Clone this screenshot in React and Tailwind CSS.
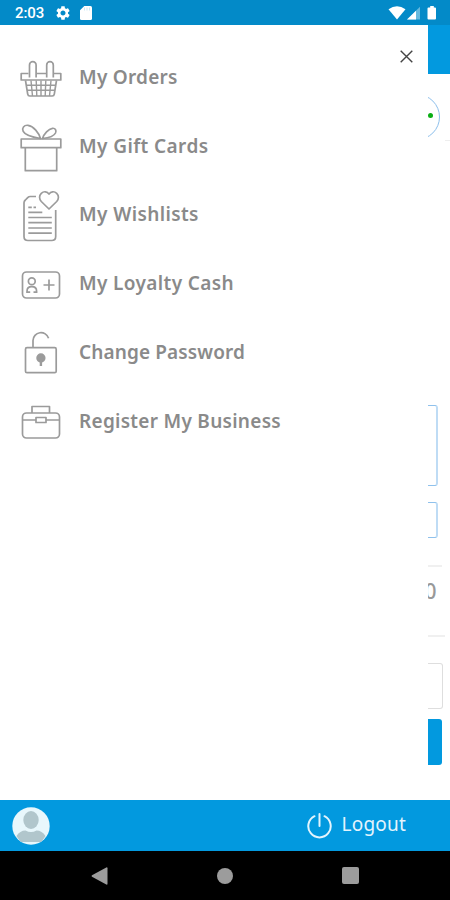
import React from "react";

const iconProps = {
  viewBox: "0 0 44 68",
  width: 44,
  height: 68,
  fill: "none",
  stroke: "#9b9b9b",
  strokeWidth: 1.7,
  strokeLinejoin: "round",
  className: "shrink-0",
};

const BasketIcon = () => (
  <svg {...iconProps}>
    <path d="M11.500 34.500V22a3.300 3.300 0 0 1 6.600 0v12.500M28.700 34.500V22a3.300 3.300 0 0 1 6.600 0v12.500" />
    <path d="M10.500 30.500H3.200v6.500h39.600v-6.500h-7.500M18.500 30.500h10" />
    <path d="M7.500 37.500l2.200 13.700q.3 1.800 2 1.800h22.600q1.700 0 2-1.800l2.200-13.700" />
    <path
      strokeWidth="1.400"
      d="M8.300 42.200h29.500M9 47.200h28M13 37.500l1.500 15.500M18.200 37.500l.6 15.500M23 37.500V53M27.800 37.500L27.200 53M33 37.500L31.500 53"
    />
  </svg>
);

const GiftIcon = () => (
  <svg {...iconProps}>
    <path d="M3.200 27h39.600v8.700H3.200zM7.300 35.700h31.400v23H7.300z" />
    <path d="M22.500 26.500C21 21 15.500 14 10 13.300c-4-.4-6.500 2.700-4.800 6C7.200 23.500 15 25.200 22.500 26.500zM24.500 26.500C26 21.500 30.500 17 34.500 16.300c2.700-.3 4.200 2 3 4.700-1.700 3.500-7 4.900-13 5.500z" />
  </svg>
);

const WishlistIcon = () => (
  <svg {...iconProps}>
    <path d="M18 16.500h-5.700q-1.500 0-2.600 1.100l-2.300 2.400Q6 21.100 6 22.700V56.500q0 4 4 4h23.700q4 0 4-4V30" />
    <path d="M31 29l-7.700-7.500c-2.300-2.400-2.300-6 0-8.200 2.400-2.300 5.900-2 7.700.8 1.800-2.800 5.300-3.100 7.700-.8 2.300 2.200 2.300 5.800 0 8.200z" />
    <path d="M10.300 27.300h3.500M15.500 27.300h2.500M10.300 32.300h14M10.300 37.500h23.500M10.300 42.700h23.500M10.300 48h23.500M10.300 53.200h23.500" />
  </svg>
);

const LoyaltyIcon = () => (
  <svg {...iconProps}>
    <rect x="4.500" y="23" width="37" height="26" rx="4" />
    <circle cx="13.800" cy="32.300" r="3.400" />
    <path d="M9 44v-1.800q0-4.500 4.800-4.500t4.800 4.500V44M9 43.200h3.200M15.500 43.200h3.200M31 30.500v11M25.500 36h11" />
  </svg>
);

const PasswordIcon = () => (
  <svg {...iconProps}>
    <rect x="7.500" y="29.700" width="30.700" height="25" rx="1.500" />
    <path d="M15 29.500V22.500a8 8 0 0 1 15.600-2.300" />
    <circle cx="22.900" cy="40" r="3.800" fill="#9b9b9b" />
    <path strokeWidth="2.400" d="M22.900 42v6" />
  </svg>
);

const BriefcaseIcon = () => (
  <svg {...iconProps}>
    <rect x="4.500" y="26" width="37" height="25" rx="4" />
    <path d="M14 26v-6.500h17.500V26M4.500 33h13.500M28 33h13.500M18 30.500h10v5h-10z" />
  </svg>
);

const menuItems = [
  { label: "My Orders", icon: BasketIcon, tracking: "tracking-[0.25px]" },
  { label: "My Gift Cards", icon: GiftIcon, tracking: "tracking-[0.4px]" },
  { label: "My Wishlists", icon: WishlistIcon, tracking: "tracking-[0.38px]" },
  { label: "My Loyalty Cash", icon: LoyaltyIcon, tracking: "tracking-[0.37px]" },
  { label: "Change Password", icon: PasswordIcon, tracking: "tracking-[0.12px]" },
  {
    label: "Register My Business",
    icon: BriefcaseIcon,
    tracking: "tracking-[0.28px]",
  },
];

const StatusBar = () => (
  <div className="flex h-[25px] shrink-0 items-center bg-[#038ac8] pl-[15px] pr-[13px] text-white">
    <span className="w-[40px] pt-px font-[Roboto] text-[15px] font-medium leading-[24px] tracking-[-0.1px]">
      2:03
    </span>
    <svg className="ml-px" width="14" height="14" viewBox="2 2 20 20" fill="white">
      <path d="M19.140 12.940c.04-.3.06-.61.06-.94 0-.32-.02-.64-.07-.94l2.030-1.580c.18-.14.23-.41.12-.61l-1.920-3.320c-.12-.22-.37-.29-.59-.22l-2.390.96c-.5-.38-1.030-.7-1.620-.94l-.36-2.540c-.04-.24-.24-.41-.48-.41h-3.840c-.24 0-.43.17-.47.41l-.36 2.540c-.59.24-1.130.57-1.620.94l-2.390-.96c-.22-.08-.47 0-.59.22L2.740 8.870c-.12.21-.08.47.12.61l2.030 1.580c-.05.3-.09.63-.09.94s.02.64.07.94l-2.030 1.580c-.18.14-.23.41-.12.61l1.920 3.320c.12.22.37.29.59.22l2.390-.96c.5.38 1.030.7 1.620.94l.36 2.540c.05.24.24.41.48.41h3.840c.24 0 .44-.17.47-.41l.36-2.540c.59-.24 1.130-.56 1.620-.94l2.390.96c.22.08.47 0 .59-.22l1.920-3.320c.12-.22.07-.47-.12-.61l-2.010-1.580zM12 15.600c-1.980 0-3.600-1.620-3.600-3.600s1.620-3.600 3.600-3.600 3.600 1.620 3.600 3.600-1.620 3.600-3.600 3.600z" />
    </svg>
    <svg className="ml-[10px]" width="12" height="14" viewBox="0 0 12 14">
      <path
        fill="white"
        d="M4.300 0H10.500Q12 0 12 1.500v11q0 1.500-1.500 1.500h-9Q0 14 0 12.500V4.300z"
      />
      <path stroke="#038ac8" strokeOpacity=".2" d="M4.500 1.500v3M7 1.500v3M9.500 1.500v3" />
    </svg>
    <svg className="ml-auto" width="49" height="14" viewBox="0 0 49 14">
      <path fill="white" d="M.5 3.300Q9-3 17.500 3.300L9 13.500z" />
      <path fill="#66b9de" d="M19 13.500L32 .7v12.800z" />
      <path fill="white" d="M19 13.500L28 4.700v8.800z" />
      <path
        fill="white"
        d="M42.200 0h3.600v1.500h1.200q1 0 1 1V12.500q0 1-1 1h-6.500q-1 0-1-1V2.500q0-1 1-1h1.700z"
      />
    </svg>
  </div>
);

// visible edge of the screen behind the drawer
const PageEdge = () => (
  <div className="flex w-[22px] flex-col items-start overflow-hidden bg-white">
    <div className="h-[49px] w-full shrink-0 bg-[#0299df]" />
    <div className="-ml-[34.500px] mt-[20px] flex size-[46px] shrink-0 items-center justify-end rounded-full border-[1.500px] border-[#8dbfec] pr-[5.500px]">
      <span className="-mt-[3px] size-[5.500px] rounded-full bg-[#0bae14]" />
    </div>
    <div className="ml-[17px] h-px w-[5px] shrink-0 bg-[#eeeeee]" />
    <div className="mt-[264px] h-[81px] w-[9.500px] shrink-0 rounded-r-[3px] border-y border-r-2 border-y-[#8fc1ec] border-r-[#bfdcf5]" />
    <div className="mt-[16px] h-[36px] w-[9.500px] shrink-0 rounded-r-[3px] border-y border-r-2 border-y-[#8fc1ec] border-r-[#bfdcf5]" />
    <div className="mt-[27px] h-[2px] w-[14px] shrink-0 bg-[#f0f0f0]" />
    <div className="mt-[10px] flex h-[30px] w-[8.500px] shrink-0 items-center justify-end font-['Noto_Sans'] text-[21px] font-medium text-[#999999]">
      0
    </div>
    <div className="mt-[28px] h-[2px] w-[17px] shrink-0 bg-[#f0f0f0]" />
    <div className="mt-[26px] h-[46px] w-[14.500px] shrink-0 rounded-r-[3px] border-y-[1.500px] border-r-[1.500px] border-[#dedede]" />
    <div className="mt-[10px] h-[46px] w-[14px] shrink-0 rounded-r-[3px] bg-[#0299df]" />
  </div>
);

const Drawer = () => (
  <div className="relative w-[428px] bg-white pl-[18px] pt-[17.500px]">
    <button className="absolute right-[15px] top-[25px]" aria-label="Close">
      <svg width="13" height="13" viewBox="0 0 13 13" stroke="#444444" strokeWidth="1.400">
        <path d="M.7.7l11.600 11.600M12.300.7L.7 12.300" />
      </svg>
    </button>
    <nav>
      {menuItems.map(({ label, icon: Icon, tracking }) => (
        <a key={label} className="flex h-[68.800px] items-center">
          <Icon />
          <span
            className={`ml-[17px] whitespace-nowrap font-['Noto_Sans'] text-[19px] font-semibold leading-[28px] text-[#8a8a8a] ${tracking}`}
          >
            {label}
          </span>
        </a>
      ))}
    </nav>
  </div>
);

const Footer = () => (
  <div className="flex h-[51px] shrink-0 items-center bg-[#0299df] pl-[12px] pr-[44px]">
    <svg width="38" height="38" viewBox="0 0 38 38">
      <circle cx="19" cy="19" r="18.700" fill="#e8f7fc" />
      <ellipse cx="19" cy="13" rx="7.700" ry="9" fill="#b1c6cc" />
      <path
        fill="#b1c6cc"
        d="M4.500 29Q8 23.500 13.500 23.500q5.500 3 11 0Q30 23.500 33.500 29q-2 3.500-4.500 6h-20q-2.500-2.500-4.500-6z"
      />
    </svg>
    <button className="ml-auto flex items-center text-white">
      <svg className="-mt-[2px]" width="26" height="28" viewBox="0 0 26 28" fill="none" stroke="#e3f4fd" strokeWidth="2" strokeLinecap="round">
        <path d="M8.500 5.200a11.200 11.200 0 1 0 10 0M13.500 3v12" />
      </svg>
      <span className="-mt-[4px] ml-[10px] font-['Noto_Sans'] text-[19px] leading-[28px] tracking-[0.200px] text-[#e3f4fd]">
        Logout
      </span>
    </button>
  </div>
);

const NavBar = () => (
  <div className="flex h-[49px] shrink-0 items-center justify-between bg-black pl-[91px] pr-[91px]">
    <svg width="17" height="18" viewBox="0 0 17 18" fill="#9c9c9c">
      <path d="M15.300.5q1.200-.5 1.200.8v15.400q0 1.300-1.200.8L1 9.800q-1-.8 0-1.600z" />
    </svg>
    <span className="size-[16px] rounded-full bg-[#9c9c9c]" />
    <span className="size-[17px] rounded-[2px] bg-[#9c9c9c]" />
  </div>
);

const App = () => {
  return (
    <div className="flex h-[900px] w-[450px] flex-col overflow-hidden bg-white">
      <StatusBar />
      <div className="flex h-[775px] shrink-0">
        <Drawer />
        <PageEdge />
      </div>
      <Footer />
      <NavBar />
    </div>
  );
};

export default App;
